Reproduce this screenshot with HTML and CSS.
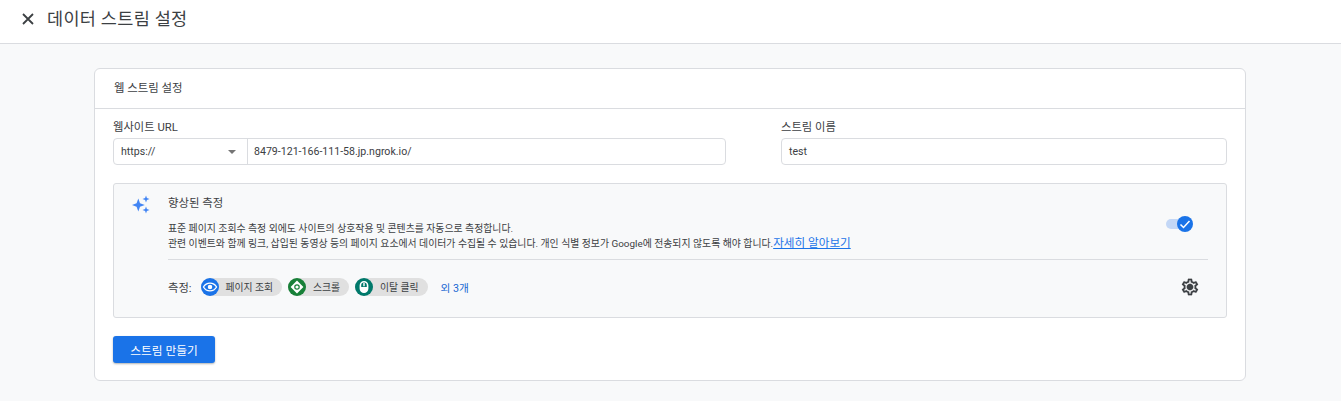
FILE: index.html
```html
<!DOCTYPE html>
<html lang="ko">
<head>
<meta charset="utf-8">
<title>데이터 스트림 설정</title>
<link rel="stylesheet" href="styles.css">
</head>
<body>
<header class="topbar">
  <svg class="close" viewBox="0 0 14 14" width="14" height="14"><path d="M2 2l10 10M12 2L2 12" stroke="#3c4043" stroke-width="1.8" fill="none"/></svg>
  <h1 class="title">데이터 스트림 설정</h1>
</header>
<main class="page">
  <section class="card">
    <div class="card-head">웹 스트림 설정</div>
    <div class="card-body">
      <div class="fields">
        <div class="field field-url">
          <label class="label">웹사이트 URL</label>
          <div class="input">
            <div class="proto">
              <span>https://</span>
              <span class="caret"></span>
            </div>
            <div class="value">8479-121-166-111-58.jp.ngrok.io/</div>
          </div>
        </div>
        <div class="field field-name">
          <label class="label">스트림 이름</label>
          <div class="input"><div class="value">test</div></div>
        </div>
      </div>
      <div class="panel">
        <svg class="sparkle" viewBox="0 0 20 20" width="20" height="20"><path fill="#4285f4" d="M6.300 3.500l1.700 4.800 4.800 1.700-4.800 1.700-1.700 4.800-1.700-4.800L-.2 10l4.800-1.700zM14 .5l.9 2.600 2.600.9-2.600.9-.9 2.600-.9-2.600-2.600-.9 2.600-.9zM14 11.500l.9 2.600 2.600.9-2.600.9-.9 2.600-.9-2.600-2.600-.9 2.600-.9z"/></svg>
        <div class="panel-main">
          <div class="panel-top">
            <div class="panel-text">
              <div class="panel-title">향상된 측정</div>
              <p class="desc">표준 페이지 조회수 측정 외에도 사이트의 상호작용 및 콘텐츠를 자동으로 측정합니다.<br>관련 이벤트와 함께 링크, 삽입된 동영상 등의 페이지 요소에서 데이터가 수집될 수 있습니다. 개인 식별 정보가 Google에 전송되지 않도록 해야 합니다.<a class="more" href="#">자세히 알아보기</a></p>
            </div>
            <div class="toggle">
              <span class="track"></span>
              <span class="knob"><svg viewBox="0 0 16 16" width="16" height="16"><path d="M3.500 8.500l3 3 6-6.500" stroke="#fff" stroke-width="1.500" fill="none"/></svg></span>
            </div>
          </div>
          <div class="measures">
            <span class="measures-label">측정:</span>
            <span class="chip">
              <span class="chip-icon blue"><svg viewBox="0 0 20 20"><path fill="none" stroke="#fff" stroke-width="1.700" d="M1.800 10C3.700 6.800 6.500 5.200 10 5.200s6.300 1.600 8.200 4.800c-1.900 3.200-4.700 4.800-8.200 4.800S3.700 13.200 1.800 10z"/><circle cx="10" cy="10" r="2.800" fill="#fff"/></svg></span>
              <span class="chip-text">페이지 조회</span>
            </span>
            <span class="chip">
              <span class="chip-icon green"><svg viewBox="0 0 20 20"><path fill="#fff" fill-rule="evenodd" d="M10 2L18 10 10 18 2 10zM10 6.500a3.500 3.500 0 1 0 0 7 3.500 3.500 0 0 0 0-7z"/><circle cx="10" cy="10" r="2" fill="#fff"/></svg></span>
              <span class="chip-text">스크롤</span>
            </span>
            <span class="chip">
              <span class="chip-icon teal"><svg viewBox="0 0 20 20"><path fill="none" stroke="#fff" stroke-width="2" d="M5.500 8a4.500 4.500 0 0 1 9 0v4a4.500 4.500 0 0 1-9 0z"/><path stroke="#fff" stroke-width="1.800" d="M10 5v4"/><path fill="#fff" d="M6 10h8v2.500a4 4 0 0 1-8 0z"/></svg></span>
              <span class="chip-text">이탈 클릭</span>
            </span>
            <a class="others" href="#">외 3개</a>
            <svg class="gear" viewBox="0 0 24 24" width="20" height="20"><path fill="#3c4043" stroke="#3c4043" stroke-width=".2" d="M19.430 12.980c.04-.32.070-.64.070-.98s-.030-.66-.070-.98l2.110-1.650c.19-.15.240-.42.120-.64l-2-3.460c-.12-.22-.39-.3-.61-.22l-2.490 1c-.52-.4-1.080-.73-1.690-.98l-.38-2.650A.488.488 0 0 0 14 2h-4c-.25 0-.46.180-.49.420l-.38 2.650c-.61.250-1.170.590-1.690.980l-2.490-1c-.23-.090-.49 0-.61.220l-2 3.460c-.13.220-.07.490.12.640l2.110 1.650c-.04.320-.07.650-.07.980s.03.660.07.980l-2.110 1.650c-.19.150-.24.420-.12.640l2 3.460c.12.220.39.300.61.220l2.490-1c.52.400 1.080.730 1.690.980l.38 2.650c.03.240.24.420.49.420h4c.25 0 .46-.180.49-.420l.38-2.650c.61-.250 1.170-.590 1.690-.980l2.490 1c.23.090.49 0 .61-.220l2-3.460c.12-.220.070-.490-.12-.640l-2.110-1.650zM17.450 11.270c.04.310.05.520.05.730s-.02.430-.05.730l-.14 1.130.89.700 1.080.840-.7 1.210-1.270-.51-1.040-.42-.9.680c-.43.320-.84.560-1.250.730l-1.060.430-.16 1.130-.2 1.350h-1.400l-.19-1.350-.16-1.130-1.060-.43c-.43-.180-.83-.410-1.230-.710l-.91-.700-1.060.430-1.270.510-.7-1.210 1.080-.840.890-.700-.14-1.130c-.03-.310-.05-.540-.05-.740s.02-.430.05-.730l.14-1.130-.89-.700-1.080-.840.7-1.210 1.270.51 1.040.42.900-.680c.43-.320.84-.560 1.250-.730l1.060-.430.16-1.130.2-1.350h1.390l.19 1.350.16 1.130 1.060.43c.43.180.83.410 1.230.710l.91.700 1.060-.430 1.270-.510.7 1.210-1.070.850-.89.700.14 1.130zM12 8c-2.210 0-4 1.790-4 4s1.790 4 4 4 4-1.790 4-4-1.790-4-4-4z"/></svg>
          </div>
        </div>
      </div>
      <button class="create" type="button">스트림 만들기</button>
    </div>
  </section>
</main>
</body>
</html>
```

FILE: styles.css
```css
* { box-sizing: border-box; }
html, body { margin: 0; padding: 0; height: 100%; }
body {
  background: #f8f9fa;
  color: #3c4043;
  font-family: Roboto, "Noto Sans CJK KR", sans-serif;
  overflow: hidden;
}
.topbar {
  height: 44px;
  background: #fff;
  border-bottom: 1px solid #dadce0;
  display: flex;
  align-items: center;
  padding: 0 0 6px 21px;
  gap: 12px;
}
.close { flex: none; }
.title { margin: 0; font-size: 17.5px; font-weight: 400; color: #3c4043; line-height: 24px; letter-spacing: .3px; }
.page { padding: 24px 95px 0 94px; }
.card {
  height: 313px;
  background: #fff;
  border: 1px solid #dadce0;
  border-radius: 6px;
}
.card-head {
  height: 40px;
  border-bottom: 1px solid #dadce0;
  padding: 0 0 3px 19px;
  display: flex;
  align-items: center;
  font-size: 11.4px;
  color: #3c4043;
}
.card-body { padding: 10px 18px 0 18px; }
.fields { display: flex; justify-content: space-between; }
.field-url { width: 613px; }
.field-name { width: 446px; }
.label { display: block; font-size: 11.3px; line-height: 16px; padding-top: 1px; margin-bottom: 2px; color: #3c4043; }
.input {
  height: 27px;
  border: 1px solid #dadce0;
  border-radius: 4px;
  display: flex;
  align-items: center;
  font-size: 10.6px;
  background: #fff;
}
.proto {
  width: 134px;
  height: 100%;
  border-right: 1px solid #dadce0;
  display: flex;
  align-items: center;
  justify-content: space-between;
  padding: 0 11px 0 7px;
}
.caret { width: 0; height: 0; border: 4px solid transparent; border-top: 4px solid #757575; border-bottom: 0; }
.value { padding: 0 6px; }
.field-name .value { padding: 0 7px; }
.panel {
  margin-top: 18px;
  height: 135px;
  background: #f8f9fa;
  border: 1px solid #dadce0;
  border-radius: 3px;
  display: flex;
  padding: 11px 18px 0 18px;
  gap: 16px;
}
.sparkle { flex: none; }
.panel-main { flex: 1; min-width: 0; }
.panel-top {
  height: 65px;
  border-bottom: 1px solid #dadce0;
  display: flex;
  justify-content: space-between;
}
.panel-title { font-size: 11.4px; line-height: 16px; color: #3c4043; }
.desc { margin: 11px 0 0; font-size: 9.9px; line-height: 14px; color: #3c4043; }
.more { color: #1a73e8; font-size: 11.6px; text-decoration: underline; }
.toggle { position: relative; width: 27px; height: 16px; margin: 21px 15px 0 0; }
.track { position: absolute; left: 0; top: 3px; width: 20px; height: 10px; border-radius: 5px; background: #c3d7f6; }
.knob { position: absolute; right: 0; top: 0; width: 16px; height: 16px; border-radius: 50%; background: #1a73e8; }
.knob svg { display: block; }
.measures { display: flex; align-items: center; gap: 6px; margin-top: 17px; height: 20px; }
.measures-label { font-size: 11.3px; margin-right: 3px; }
.chip {
  display: flex;
  align-items: center;
  height: 18px;
  border-radius: 9px;
  background: #e0e0e0;
  padding-right: 9px;
  font-size: 9.8px;
  color: #3c4043;
}
.chip-icon { width: 18px; height: 18px; border-radius: 50%; display: flex; align-items: center; justify-content: center; margin-right: 7px; }
.chip-icon svg { width: 16px; height: 16px; }
.blue { background: #1a73e8; }
.green { background: #188038; }
.teal { background: #00796b; }
.others { margin-left: 7px; font-size: 10.7px; color: #1967d2; text-decoration: none; }
.gear { margin-left: auto; margin-right: 8px; }
.create {
  display: block;
  margin-top: 18px;
  width: 102px;
  height: 27px;
  border: 0;
  border-radius: 3px;
  background: #1a73e8;
  color: #fff;
  font: 400 11.7px Roboto, "Noto Sans CJK KR", sans-serif;
  box-shadow: 0 1px 2px rgba(60,64,67,.4);
}
```
